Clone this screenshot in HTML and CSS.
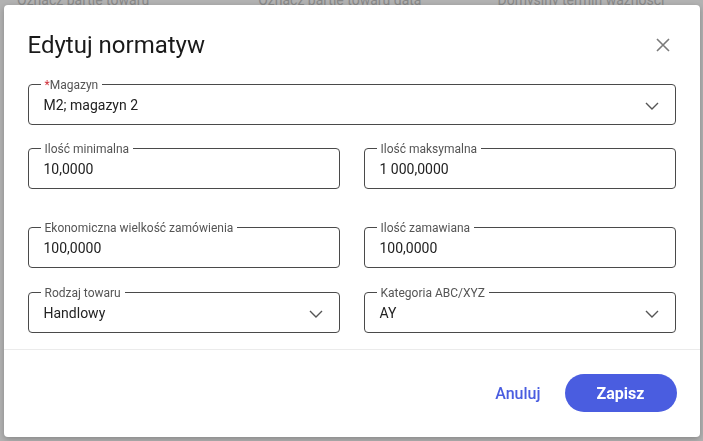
FILE: index.html
```html
<!doctype html>
<html lang="pl">
<head>
    <meta charset="UTF-8" />
    <title>Edytuj normatyw</title>
    <link rel="stylesheet" href="styles.css">
</head>
<body>

<div class="page-header">
    <span class="col-title first">Oznacz partię towaru</span>
    <span class="col-title second">Oznacz partię towaru datą</span>
    <span class="col-title third">Domyślny termin ważności</span>
</div>

<div class="overlay">
    <div class="dialog">
        <div class="dialog-head">
            <h2 class="dialog-title">Edytuj normatyw</h2>
            <span class="close-btn">
                <svg width="14" height="14" viewBox="0 0 14 14"><path d="M1 1 L13 13 M13 1 L1 13" stroke="#7a7a7a" stroke-width="1.6" fill="none"/></svg>
            </span>
        </div>

        <div class="dialog-body">
            <fieldset class="field full">
                <legend><span class="req">*</span>Magazyn</legend>
                <div class="field-row">
                    <span class="value">M2; magazyn 2</span>
                    <svg class="chevron" width="14" height="8" viewBox="0 0 14 8"><path d="M1 1 L7 7 L13 1" stroke="#555" stroke-width="1.4" fill="none"/></svg>
                </div>
            </fieldset>

            <div class="field-grid row2">
                <fieldset class="field">
                    <legend>Ilość minimalna</legend>
                    <div class="field-row"><span class="value">10,0000</span></div>
                </fieldset>
                <fieldset class="field">
                    <legend>Ilość maksymalna</legend>
                    <div class="field-row"><span class="value">1 000,0000</span></div>
                </fieldset>
            </div>

            <div class="field-grid row3">
                <fieldset class="field">
                    <legend>Ekonomiczna wielkość zamówienia</legend>
                    <div class="field-row"><span class="value">100,0000</span></div>
                </fieldset>
                <fieldset class="field">
                    <legend>Ilość zamawiana</legend>
                    <div class="field-row"><span class="value">100,0000</span></div>
                </fieldset>
            </div>

            <div class="field-grid row4">
                <fieldset class="field">
                    <legend>Rodzaj towaru</legend>
                    <div class="field-row">
                        <span class="value">Handlowy</span>
                        <svg class="chevron" width="14" height="8" viewBox="0 0 14 8"><path d="M1 1 L7 7 L13 1" stroke="#555" stroke-width="1.4" fill="none"/></svg>
                    </div>
                </fieldset>
                <fieldset class="field">
                    <legend>Kategoria ABC/XYZ</legend>
                    <div class="field-row">
                        <span class="value">AY</span>
                        <svg class="chevron" width="14" height="8" viewBox="0 0 14 8"><path d="M1 1 L7 7 L13 1" stroke="#555" stroke-width="1.4" fill="none"/></svg>
                    </div>
                </fieldset>
            </div>
        </div>

        <div class="dialog-foot">
            <a href="#" class="btn-text">Anuluj</a>
            <a href="#" class="btn-main">Zapisz</a>
        </div>
    </div>
</div>

</body>
</html>
```

FILE: styles.css
```css
body {
    margin: 0;
    font-family: Roboto, 'Liberation Sans', sans-serif;
    background: #ffffff;
    overflow: hidden;
}
.page-header {
    display: flex;
    margin-top: -8px;
    font-size: 14px;
    color: #c4c4c4;
}
.col-title.first { margin-left: 17px; }
.col-title.second { margin-left: 109px; }
.col-title.third { margin-left: 76px; }

.overlay {
    position: fixed;
    inset: 0;
    background: rgba(0, 0, 0, 0.3);
    display: flex;
    align-items: center;
    justify-content: center;
}
.dialog {
    width: 696px;
    height: 432px;
    background: #fff;
    border-radius: 4px;
    box-shadow: 0 2px 6px rgba(0, 0, 0, 0.25);
    display: flex;
    flex-direction: column;
    box-sizing: border-box;
}
.dialog-head {
    display: flex;
    justify-content: space-between;
    align-items: flex-start;
    padding: 22px 24px 0 24px;
}
.dialog-title {
    margin: 0;
    font-size: 24px;
    font-weight: 400;
    line-height: 36px;
    color: #1a1a1a;
}
.close-btn {
    margin-top: 11px;
    margin-right: 6px;
    line-height: 0;
}
.dialog-body {
    padding: 15px 24px 16px 24px;
    border-bottom: 1px solid #ebebeb;
}
.field-grid {
    display: grid;
    grid-template-columns: 1fr 1fr;
    column-gap: 24px;
}
.row2 { margin-top: 17px; }
.row3 { margin-top: 32px; }
.row4 { margin-top: 18px; }

.field {
    margin: 0;
    border: 1px solid #4a4a4a;
    border-radius: 4px;
    padding: 3px 16px 9px 12px;
    min-width: 0;
}
.field legend {
    padding: 0 4px;
    font-size: 12px;
    line-height: 14px;
    color: #555;
}
.req { color: #d0313b; }
.field-row {
    display: flex;
    align-items: center;
    justify-content: space-between;
    padding-left: 3px;
}
.value {
    font-size: 14px;
    line-height: 20px;
    color: #222;
}
.chevron { margin-top: 2px; }

.dialog-foot {
    flex: 1;
    display: flex;
    justify-content: flex-end;
    align-items: center;
    padding: 0 23px 0 24px;
}
.btn-text {
    text-decoration: none;
    color: #4a5de0;
    font-size: 16px;
    font-weight: 500;
    margin-right: 24px;
}
.btn-main {
    text-decoration: none;
    background: #4a5de0;
    color: #fff;
    font-size: 16px;
    font-weight: 700;
    width: 112px;
    height: 38px;
    border-radius: 19px;
    display: flex;
    align-items: center;
    justify-content: center;
}
```
